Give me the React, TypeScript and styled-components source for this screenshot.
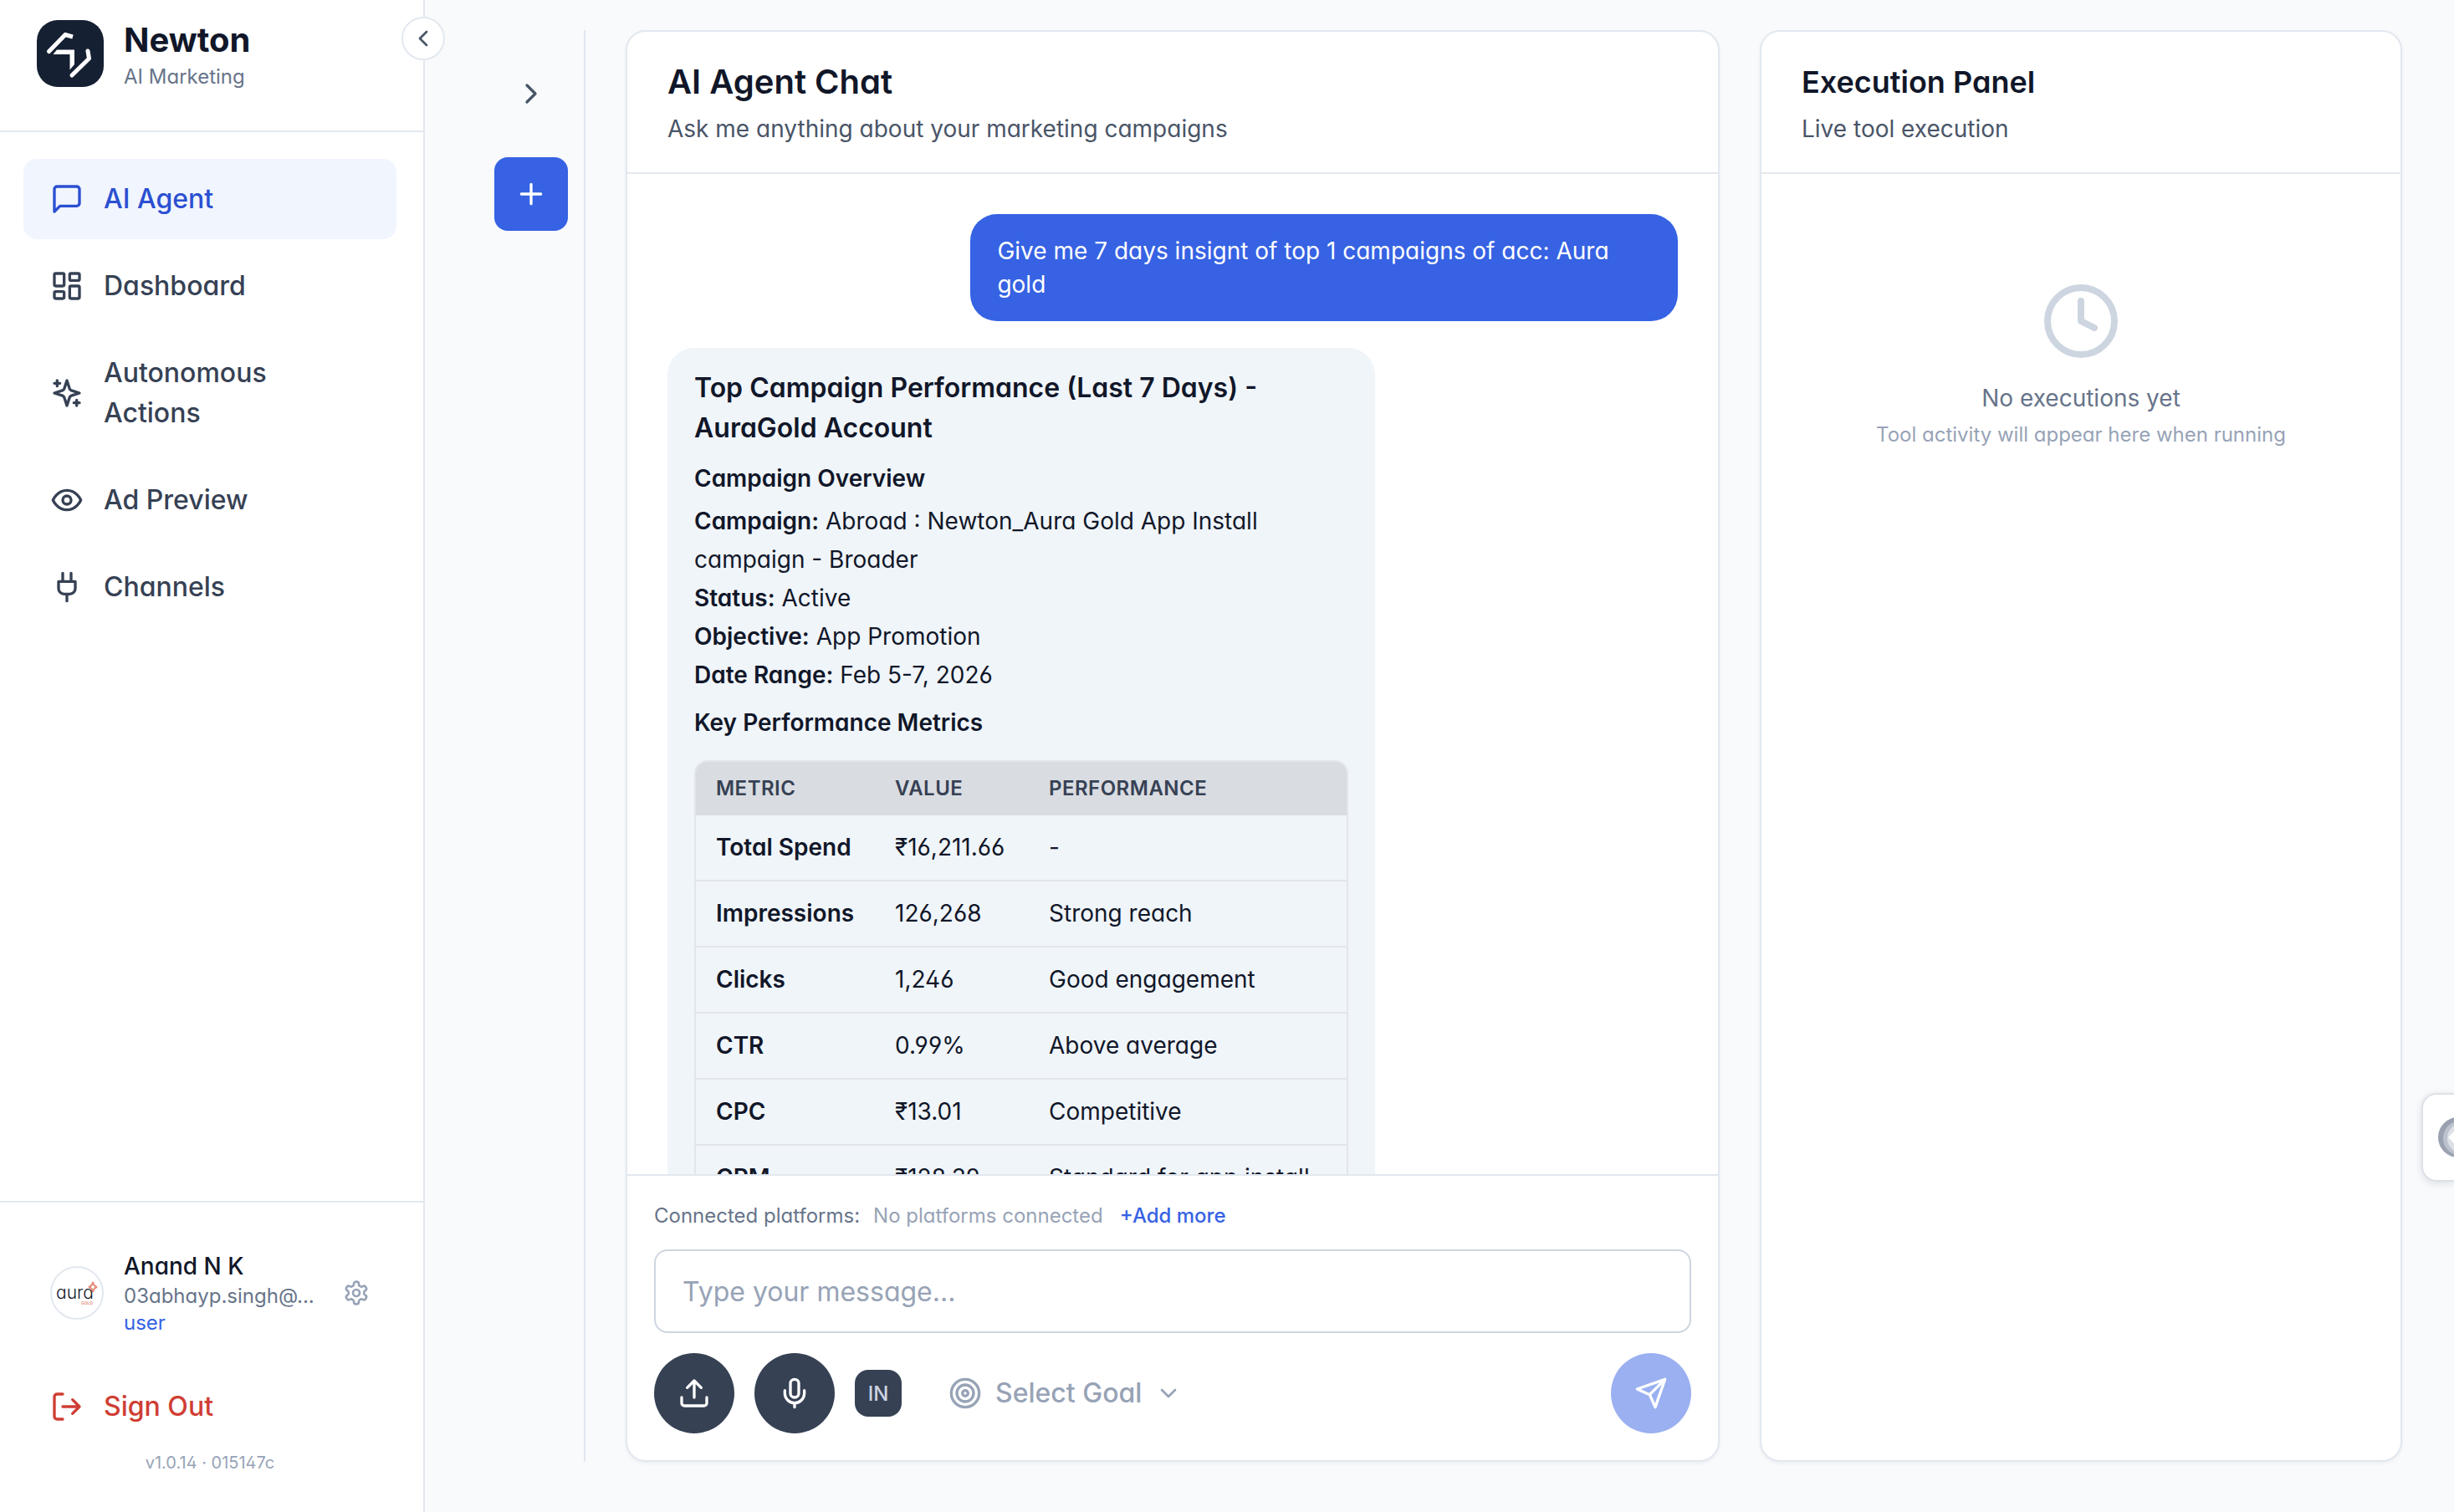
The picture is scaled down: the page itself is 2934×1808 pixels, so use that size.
import React from "react";
import styled, { createGlobalStyle } from "styled-components";

const color = {
  ink: "#111729",
  text: "#364154",
  soft: "#4a5568",
  muted: "#67748a",
  faint: "#97a3b6",
  line: "#e2e8ef",
  lineStrong: "#cdd5e0",
  page: "#f8fafc",
  bubble: "#f0f5fa",
  blue: "#3662e3",
  blueDark: "#2b4fd1",
  blueSoft: "#f0f5fe",
  red: "#cf3e34",
};

const GlobalStyle = createGlobalStyle`
  *, *::before, *::after { box-sizing: border-box; }
  body {
    margin: 0;
    background: ${color.page};
    color: ${color.ink};
    font-family: Inter, "Liberation Sans", sans-serif;
    font-feature-settings: "cv02", "cv03", "cv04", "cv11";
    -webkit-font-smoothing: antialiased;
  }
  h1, h2, h3, p { margin: 0; }
  button, input, select {
    font: inherit;
    font-feature-settings: inherit;
    color: inherit;
    margin: 0;
    padding: 0;
    border: 0;
    background: none;
  }
  button { cursor: pointer; }
  a { text-decoration: none; color: inherit; }
`;

/* ---------- icons ---------- */

const Glyph = styled.svg<{ $size: number }>`
  display: block;
  flex: none;
  width: ${(p) => p.$size}px;
  height: ${(p) => p.$size}px;
  fill: none;
  stroke: currentColor;
  stroke-width: 2;
  stroke-linecap: round;
  stroke-linejoin: round;
`;

function Icon({ size = 40, children }: { size?: number; children: React.ReactNode }) {
  return (
    <Glyph $size={size} viewBox="0 0 24 24" aria-hidden="true">
      {children}
    </Glyph>
  );
}

const ChatIcon = () => (
  <Icon>
    <path d="M21 15a2 2 0 0 1-2 2H7l-4 4V5a2 2 0 0 1 2-2h14a2 2 0 0 1 2 2z" />
  </Icon>
);
const DashboardIcon = () => (
  <Icon>
    <rect width="7" height="9" x="3" y="3" rx="1" />
    <rect width="7" height="5" x="14" y="3" rx="1" />
    <rect width="7" height="9" x="14" y="12" rx="1" />
    <rect width="7" height="5" x="3" y="16" rx="1" />
  </Icon>
);
const SparklesIcon = () => (
  <Icon>
    <path d="m12 3-1.912 5.813a2 2 0 0 1-1.275 1.275L3 12l5.813 1.912a2 2 0 0 1 1.275 1.275L12 21l1.912-5.813a2 2 0 0 1 1.275-1.275L21 12l-5.813-1.912a2 2 0 0 1-1.275-1.275L12 3Z" />
    <path d="M5 3v4M19 17v4M3 5h4M17 19h4" />
  </Icon>
);
const EyeIcon = () => (
  <Icon>
    <path d="M2 12s3-7 10-7 10 7 10 7-3 7-10 7-10-7-10-7Z" />
    <circle cx="12" cy="12" r="3" />
  </Icon>
);
const PlugIcon = () => (
  <Icon>
    <path d="M12 22v-5M9 8V2M15 8V2M18 8v5a4 4 0 0 1-4 4h-4a4 4 0 0 1-4-4V8Z" />
  </Icon>
);
const LogOutIcon = () => (
  <Icon>
    <path d="M9 21H5a2 2 0 0 1-2-2V5a2 2 0 0 1 2-2h4" />
    <path d="m16 17 5-5-5-5M21 12H9" />
  </Icon>
);
const SettingsIcon = () => (
  <Icon size={32}>
    <path d="M12.22 2h-.44a2 2 0 0 0-2 2v.18a2 2 0 0 1-1 1.73l-.43.25a2 2 0 0 1-2 0l-.15-.08a2 2 0 0 0-2.73.73l-.22.38a2 2 0 0 0 .73 2.73l.15.1a2 2 0 0 1 1 1.72v.51a2 2 0 0 1-1 1.74l-.15.09a2 2 0 0 0-.73 2.73l.22.38a2 2 0 0 0 2.73.73l.15-.08a2 2 0 0 1 2 0l.43.25a2 2 0 0 1 1 1.73V20a2 2 0 0 0 2 2h.44a2 2 0 0 0 2-2v-.18a2 2 0 0 1 1-1.73l.43-.25a2 2 0 0 1 2 0l.15.08a2 2 0 0 0 2.73-.73l.22-.39a2 2 0 0 0-.73-2.73l-.15-.08a2 2 0 0 1-1-1.74v-.5a2 2 0 0 1 1-1.74l.15-.09a2 2 0 0 0 .73-2.73l-.22-.38a2 2 0 0 0-2.73-.73l-.15.08a2 2 0 0 1-2 0l-.43-.25a2 2 0 0 1-1-1.73V4a2 2 0 0 0-2-2z" />
    <circle cx="12" cy="12" r="3" />
  </Icon>
);
const UploadIcon = () => (
  <Icon>
    <path d="M21 15v4a2 2 0 0 1-2 2H5a2 2 0 0 1-2-2v-4M17 8l-5-5-5 5M12 3v12" />
  </Icon>
);
const MicIcon = () => (
  <Icon>
    <path d="M12 2a3 3 0 0 0-3 3v7a3 3 0 0 0 6 0V5a3 3 0 0 0-3-3Z" />
    <path d="M19 10v2a7 7 0 0 1-14 0v-2M12 19v3" />
  </Icon>
);
const TargetIcon = () => (
  <Icon>
    <circle cx="12" cy="12" r="10" />
    <circle cx="12" cy="12" r="6" />
    <circle cx="12" cy="12" r="2" />
  </Icon>
);
const SendIcon = () => (
  <Icon>
    <path d="m22 2-7 20-4-9-9-4ZM22 2 11 13" />
  </Icon>
);
const ClockIcon = () => (
  <Icon size={96}>
    <circle cx="12" cy="12" r="10" />
    <path d="M12 6v6l4 2" />
  </Icon>
);

/* ---------- sidebar ---------- */

const Shell = styled.div`
  display: flex;
  height: 100vh;
  overflow: hidden;
`;

const Sidebar = styled.aside`
  position: relative;
  flex: none;
  display: flex;
  flex-direction: column;
  width: 508px;
  background: #fff;
  border-right: 2px solid ${color.line};
`;

const Brand = styled.header`
  display: flex;
  align-items: center;
  gap: 24px;
  padding: 20px 44px 48px;
  border-bottom: 2px solid ${color.line};
`;

const BrandMark = styled.svg`
  flex: none;
  width: 80px;
  height: 80px;
`;

const BrandName = styled.h1`
  font-size: 40px;
  line-height: 56px;
  font-weight: 700;
`;

const Caption = styled.p<{ $tone?: string }>`
  font-size: 24px;
  line-height: 32px;
  color: ${(p) => p.$tone ?? color.muted};
`;

const CollapseButton = styled.button`
  position: absolute;
  top: 20px;
  right: -26px;
  z-index: 1;
  display: grid;
  place-items: center;
  width: 52px;
  height: 52px;
  border: 2px solid ${color.line};
  border-radius: 50%;
  background: #fff;
  color: ${color.soft};
`;

const Nav = styled.nav`
  flex: 1;
  display: flex;
  flex-direction: column;
  gap: 8px;
  padding: 32px 32px 32px 28px;
`;

const NavLink = styled.a<{ $active?: boolean }>`
  display: flex;
  align-items: center;
  gap: 24px;
  padding: 24px 32px;
  border-radius: 16px;
  font-size: 32px;
  line-height: 48px;
  font-weight: 500;
  color: ${(p) => (p.$active ? color.blueDark : color.text)};
  background: ${(p) => (p.$active ? color.blueSoft : "transparent")};
`;

const Account = styled.footer`
  display: flex;
  flex-direction: column;
  padding: 32px 32px 44px 28px;
  border-top: 2px solid ${color.line};
`;

const Profile = styled.div`
  display: flex;
  align-items: center;
  gap: 24px;
  padding: 24px 32px;
`;

const Avatar = styled.svg`
  flex: none;
  width: 64px;
  height: 64px;
  border: 2px solid ${color.line};
  border-radius: 50%;
  background: #fff;
`;

const ProfileText = styled.div`
  flex: 1;
  min-width: 0;
`;

const ProfileName = styled.p`
  font-size: 28px;
  line-height: 40px;
  font-weight: 500;
`;

const PlainIconButton = styled.button<{ $tone: string; $size: number }>`
  flex: none;
  display: grid;
  place-items: center;
  width: ${(p) => p.$size}px;
  height: ${(p) => p.$size}px;
  color: ${(p) => p.$tone};
`;

const SignOut = styled.button`
  display: flex;
  align-items: center;
  gap: 24px;
  margin-top: 12px;
  padding: 24px 32px;
  font-size: 32px;
  line-height: 48px;
  font-weight: 500;
  color: ${color.red};
`;

const Version = styled.p`
  margin-top: 4px;
  font-size: 20px;
  line-height: 30px;
  text-align: center;
  color: ${color.faint};
`;

/* ---------- workspace ---------- */

const Workspace = styled.main`
  flex: 1;
  min-width: 0;
  display: flex;
  gap: 48px;
  padding: 36px 62px 60px 64px;
`;

const Rail = styled.div`
  flex: none;
  display: flex;
  flex-direction: column;
  align-items: center;
  gap: 32px;
  width: 128px;
  padding-top: 32px;
  border-right: 2px solid ${color.line};
`;

const NewChatButton = styled.button`
  display: grid;
  place-items: center;
  width: 88px;
  height: 88px;
  border-radius: 16px;
  background: ${color.blue};
  color: #fff;
`;

const Card = styled.section<{ $width?: string }>`
  flex: ${(p) => (p.$width ? `0 0 ${p.$width}` : "1 1 0")};
  min-width: 0;
  display: flex;
  flex-direction: column;
  overflow: hidden;
  background: #fff;
  border: 2px solid ${color.line};
  border-radius: 24px;
  box-shadow: 0 2px 4px rgba(15, 23, 42, 0.05);
`;

const CardHeader = styled.header`
  flex: none;
  padding: 32px 48px;
  border-bottom: 2px solid ${color.line};
`;

const CardTitle = styled.h2<{ $compact?: boolean }>`
  font-size: ${(p) => (p.$compact ? 36 : 40)}px;
  line-height: 56px;
  font-weight: 600;
`;

const CardSubtitle = styled.p`
  margin-top: 8px;
  font-size: 28px;
  line-height: 40px;
  color: ${color.soft};
`;

const Messages = styled.div`
  flex: 1;
  min-height: 0;
  overflow-y: auto;
  scrollbar-width: none;
  display: flex;
  flex-direction: column;
  gap: 32px;
  padding: 48px;
`;

const Bubble = styled.div<{ $own?: boolean }>`
  flex: none;
  width: 70%;
  align-self: ${(p) => (p.$own ? "flex-end" : "flex-start")};
  padding: 24px 32px;
  border-radius: 32px;
  font-size: 28px;
  line-height: 40px;
  color: ${(p) => (p.$own ? "#fff" : color.ink)};
  background: ${(p) => (p.$own ? color.blue : color.bubble)};
`;

const AnswerTitle = styled.h2`
  font-size: 32px;
  line-height: 48px;
  font-weight: 600;
  margin-bottom: 16px;
`;

const AnswerHeading = styled.h3`
  font-size: 28px;
  line-height: 40px;
  font-weight: 600;
`;

const Facts = styled.div`
  margin: 8px 0 14px;
  line-height: 46px;

  strong {
    font-weight: 600;
  }
`;

const TableFrame = styled.div`
  margin-top: 25px;
  overflow: hidden;
  border: 2px solid #e2e6ea;
  border-radius: 16px;
`;

const MetricsTable = styled.table`
  width: 100%;
  table-layout: fixed;
  border-collapse: collapse;
  text-align: left;

  thead {
    background: #d9dce1;
    color: ${color.text};
    font-size: 24px;
    line-height: 32px;
    letter-spacing: 0.02em;
    text-transform: uppercase;
  }
  th,
  td {
    padding: 16px 24px;
    font-weight: 400;
  }
  thead th,
  tbody th {
    font-weight: 600;
  }
  tbody {
    line-height: 45px;
  }
  tbody tr {
    border-bottom: 2px solid #e2e6ea;
  }
`;

const NarrowCol = styled.col<{ $width: number }>`
  width: ${(p) => p.$width}px;
`;

const Composer = styled.form`
  flex: none;
  display: flex;
  flex-direction: column;
  gap: 24px;
  padding: 32px;
  border-top: 2px solid ${color.line};
`;

const Platforms = styled.div`
  display: flex;
  align-items: center;
  gap: 16px;
`;

const AddMore = styled.button`
  margin-left: 4px;
  font-size: 24px;
  line-height: 32px;
  font-weight: 500;
  color: ${color.blue};
`;

const MessageInput = styled.input`
  width: 100%;
  height: 100px;
  padding: 0 32px;
  border: 2px solid ${color.lineStrong};
  border-radius: 16px;
  background: #fff;
  font-size: 32px;

  &::placeholder {
    color: ${color.faint};
    opacity: 1;
  }
`;

const Tools = styled.div`
  display: flex;
  align-items: center;
  gap: 24px;
`;

const RoundButton = styled.button<{ $send?: boolean }>`
  display: grid;
  place-items: center;
  width: 96px;
  height: 96px;
  border-radius: 50%;
  margin-left: ${(p) => (p.$send ? "auto" : "0")};
  background: ${(p) => (p.$send ? "#9bb0f1" : color.text)};
  color: #fff;
`;

const LanguageButton = styled.button`
  width: 56px;
  height: 56px;
  border-radius: 16px;
  background: ${color.text};
  color: ${color.lineStrong};
  font-size: 24px;
  font-weight: 500;
`;

const Goal = styled.label`
  display: flex;
  align-items: center;
  gap: 16px;
  padding: 0 32px;
  color: ${color.faint};
`;

const GoalSelect = styled.select`
  appearance: none;
  field-sizing: content;
  font-size: 32px;
  line-height: 48px;
  font-weight: 500;
`;

const Empty = styled.div`
  display: flex;
  flex-direction: column;
  align-items: center;
  padding: 128px 32px;
  text-align: center;
  color: ${color.lineStrong};
`;

const EmptyTitle = styled.p`
  margin: 24px 0 8px;
  font-size: 28px;
  line-height: 40px;
  color: ${color.muted};
`;

const EdgeTab = styled.button`
  position: fixed;
  bottom: 395px;
  right: 0;
  width: 39px;
  height: 106px;
  padding-left: 18px;
  overflow: hidden;
  border: 2px solid #dde1e7;
  border-right: 0;
  border-radius: 18px 0 0 18px;
  background: #fff;
  box-shadow: 0 2px 10px rgba(15, 23, 42, 0.12);
`;

const EdgeMark = styled.svg`
  display: block;
  width: 48px;
  height: 48px;
`;

const nav = [
  { label: "AI Agent", icon: <ChatIcon />, active: true },
  { label: "Dashboard", icon: <DashboardIcon /> },
  { label: "Autonomous Actions", icon: <SparklesIcon /> },
  { label: "Ad Preview", icon: <EyeIcon /> },
  { label: "Channels", icon: <PlugIcon /> },
];

const metrics = [
  ["Total Spend", "₹16,211.66", "-"],
  ["Impressions", "126,268", "Strong reach"],
  ["Clicks", "1,246", "Good engagement"],
  ["CTR", "0.99%", "Above average"],
  ["CPC", "₹13.01", "Competitive"],
  ["CPM", "₹128.39", "Standard for app install"],
];

export default function App() {
  return (
    <Shell>
      <GlobalStyle />
      <Sidebar>
        <Brand>
          <BrandMark viewBox="0 0 80 80" role="img" aria-label="Newton logo">
            <rect width="80" height="80" rx="25" fill="#162033" />
            <g fill="none" stroke="#fff" strokeWidth="5" strokeLinecap="round" strokeLinejoin="round">
              <path d="M14.500 37.500 34 17.500" />
              <path d="M34 17.500 43 20" strokeLinecap="butt" />
              <path d="M61 37 62.500 46 42 66" />
            </g>
            <path d="M24 35.500H45V53L39.500 59.500V41H19.500Z" fill="#fff" />
          </BrandMark>
          <div>
            <BrandName>Newton</BrandName>
            <Caption>AI Marketing</Caption>
          </div>
        </Brand>
        <CollapseButton type="button" aria-label="Collapse sidebar">
          <Icon size={32}>
            <path d="m15 18-6-6 6-6" />
          </Icon>
        </CollapseButton>
        <Nav>
          {nav.map((item) => (
            <NavLink key={item.label} href="#" $active={item.active}>
              {item.icon}
              <span>{item.label}</span>
            </NavLink>
          ))}
        </Nav>
        <Account>
          <Profile>
            <Avatar viewBox="0 0 60 60" role="img" aria-label="aura gold">
              <text x="5" y="37" fontSize="21" fontWeight="300" fill={color.ink}>
                aura
              </text>
              <text x="35" y="44" fontSize="5" fontWeight="600" fill="#e58b78">
                GOLD
              </text>
              <path
                d="M49 17q1 5 5 6-4 1-5 6-1-5-5-6 4-1 5-6z"
                fill="none"
                stroke="#e58b78"
                strokeWidth="2"
              />
            </Avatar>
            <ProfileText>
              <ProfileName>Anand N K</ProfileName>
              <Caption>03abhayp.singh@...</Caption>
              <Caption $tone={color.blue}>user</Caption>
            </ProfileText>
            <PlainIconButton type="button" aria-label="Settings" $tone={color.faint} $size={32}>
              <SettingsIcon />
            </PlainIconButton>
          </Profile>
          <SignOut type="button">
            <LogOutIcon />
            Sign Out
          </SignOut>
          <Version>v1.0.14 · 015147c</Version>
        </Account>
      </Sidebar>

      <Workspace>
        <Rail>
          <PlainIconButton type="button" aria-label="Show chats" $tone={color.soft} $size={88}>
            <Icon>
              <path d="m9 18 6-6-6-6" />
            </Icon>
          </PlainIconButton>
          <NewChatButton type="button" aria-label="New chat">
            <Icon>
              <path d="M5 12h14M12 5v14" />
            </Icon>
          </NewChatButton>
        </Rail>

        <Card>
          <CardHeader>
            <CardTitle>AI Agent Chat</CardTitle>
            <CardSubtitle>Ask me anything about your marketing campaigns</CardSubtitle>
          </CardHeader>
          <Messages>
            <Bubble $own>Give me 7 days insignt of top 1 campaigns of acc: Aura gold</Bubble>
            <Bubble>
              <AnswerTitle>Top Campaign Performance (Last 7 Days) - AuraGold Account</AnswerTitle>
              <AnswerHeading>Campaign Overview</AnswerHeading>
              <Facts>
                <p>
                  <strong>Campaign:</strong> Abroad : Newton_Aura Gold App Install campaign - Broader
                </p>
                <p>
                  <strong>Status:</strong> Active
                </p>
                <p>
                  <strong>Objective:</strong> App Promotion
                </p>
                <p>
                  <strong>Date Range:</strong> Feb 5-7, 2026
                </p>
              </Facts>
              <AnswerHeading>Key Performance Metrics</AnswerHeading>
              <TableFrame>
                <MetricsTable>
                  <colgroup>
                    <NarrowCol $width={214} />
                    <NarrowCol $width={184} />
                    <col />
                  </colgroup>
                  <thead>
                    <tr>
                      <th scope="col">Metric</th>
                      <th scope="col">Value</th>
                      <th scope="col">Performance</th>
                    </tr>
                  </thead>
                  <tbody>
                    {metrics.map(([name, value, note]) => (
                      <tr key={name}>
                        <th scope="row">{name}</th>
                        <td>{value}</td>
                        <td>{note}</td>
                      </tr>
                    ))}
                  </tbody>
                </MetricsTable>
              </TableFrame>
            </Bubble>
          </Messages>
          <Composer onSubmit={(e) => e.preventDefault()}>
            <Platforms>
              <Caption>Connected platforms:</Caption>
              <Caption $tone={color.faint}>No platforms connected</Caption>
              <AddMore type="button">+Add more</AddMore>
            </Platforms>
            <MessageInput type="text" aria-label="Message" placeholder="Type your message..." />
            <Tools>
              <RoundButton type="button" aria-label="Upload file">
                <UploadIcon />
              </RoundButton>
              <RoundButton type="button" aria-label="Record voice">
                <MicIcon />
              </RoundButton>
              <LanguageButton type="button">IN</LanguageButton>
              <Goal>
                <TargetIcon />
                <GoalSelect aria-label="Goal" defaultValue="">
                  <option value="">Select Goal</option>
                </GoalSelect>
                <Icon size={32}>
                  <path d="m6 9 6 6 6-6" />
                </Icon>
              </Goal>
              <RoundButton type="submit" aria-label="Send" $send>
                <SendIcon />
              </RoundButton>
            </Tools>
          </Composer>
        </Card>

        <Card $width="768px">
          <CardHeader>
            <CardTitle $compact>Execution Panel</CardTitle>
            <CardSubtitle>Live tool execution</CardSubtitle>
          </CardHeader>
          <Empty>
            <ClockIcon />
            <EmptyTitle>No executions yet</EmptyTitle>
            <Caption $tone={color.faint}>Tool activity will appear here when running</Caption>
          </Empty>
        </Card>
      </Workspace>

      <EdgeTab type="button" aria-label="Open side tools">
        <EdgeMark viewBox="0 0 48 48" aria-hidden="true">
          <circle cx="24" cy="24" r="24" fill="#9aa2b1" />
          <circle cx="27" cy="25" r="21" fill="#bcc2ce" />
          <circle cx="29" cy="25" r="18" fill="#dde0e7" />
          <path d="M12 24 26 10 40 24 26 38Z" fill="#fff" />
        </EdgeMark>
      </EdgeTab>
    </Shell>
  );
}
